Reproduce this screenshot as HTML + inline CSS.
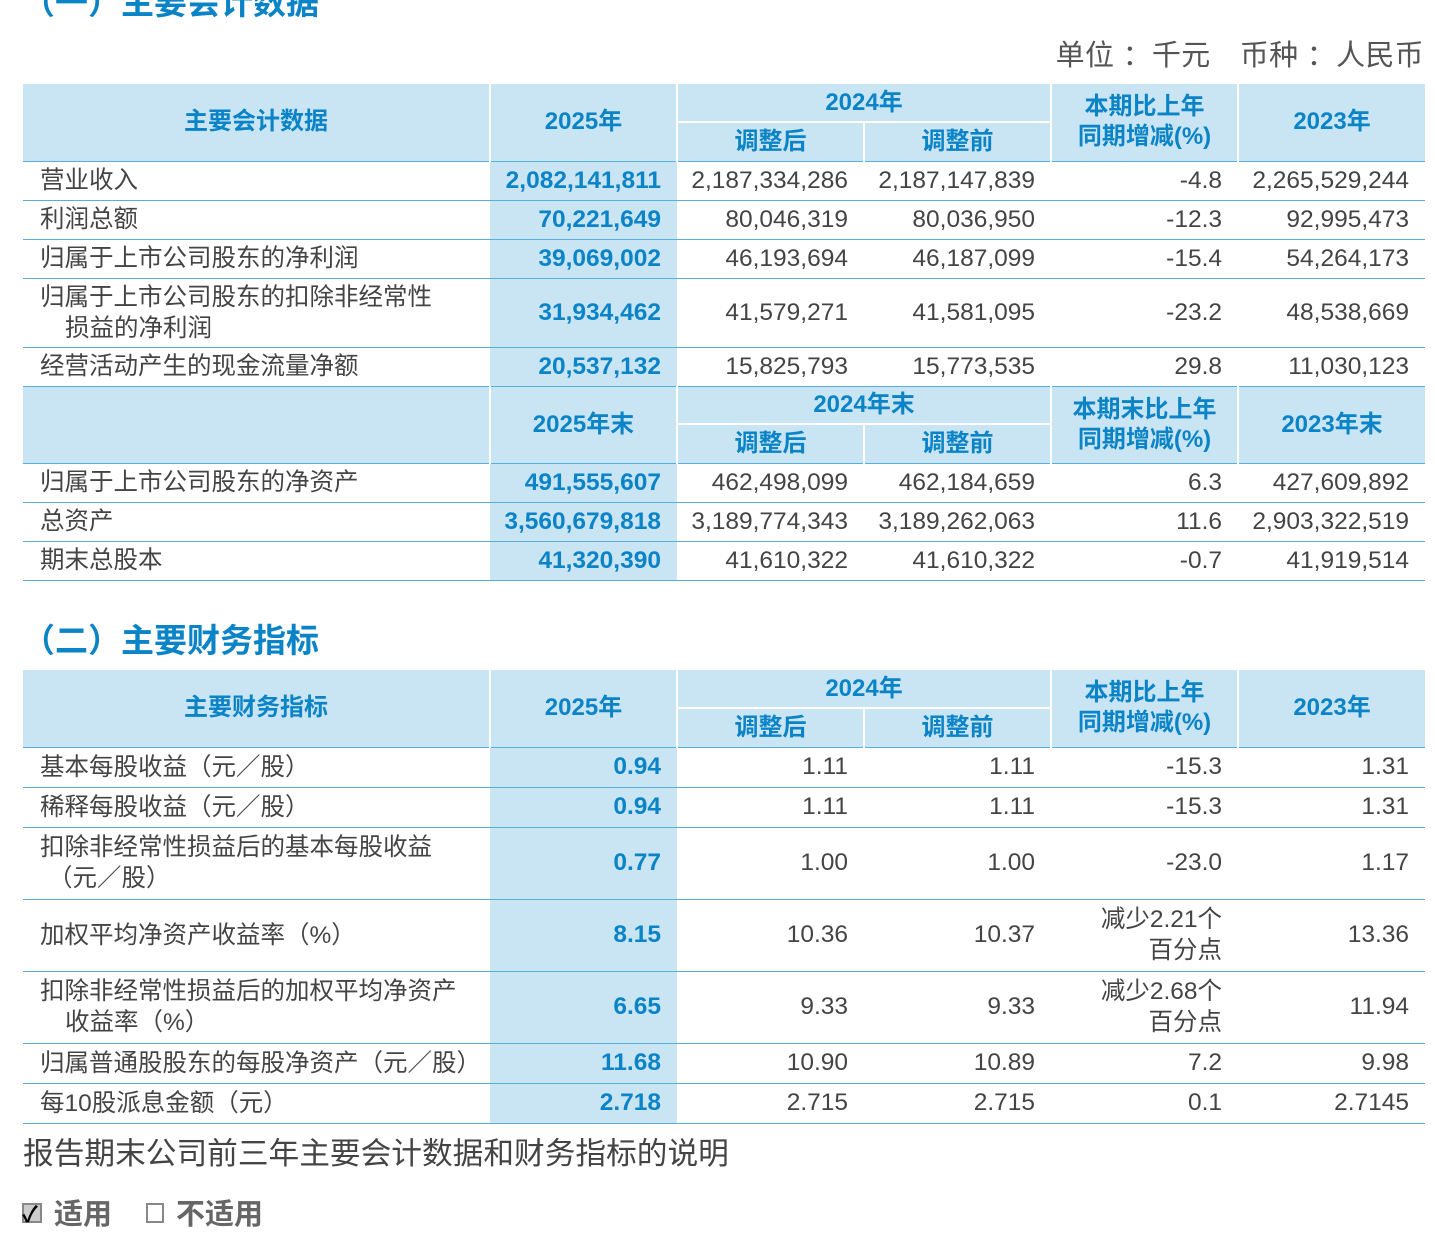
<!DOCTYPE html>
<html><head><meta charset="utf-8"><style>
body{margin:0;width:1435px;height:1231px;background:#fff;position:relative;overflow:hidden;font-family:"Liberation Sans","Noto Sans CJK SC",sans-serif;color:#444}
.t{position:absolute;white-space:nowrap}
table{position:absolute;left:23px;border-collapse:collapse;table-layout:fixed;font-size:24.5px}
td{padding:0;overflow:hidden;white-space:nowrap}
td.l{padding-left:17px;text-align:left;line-height:31px}
td.n{text-align:right;padding-right:16px}
td.b{background:#c9e4f3;color:#0a84c6;font-weight:bold}
tr.r td{border-bottom:1.5px solid #5aaede}
tr.h td{background:#c9e4f3;color:#0a84c6;font-weight:bold;text-align:center;border-left:2px solid #fff;border-right:2px solid #fff;line-height:30px;font-size:24px;border-bottom:1.5px solid #5aaede}
tr.h td.s{border-top:2px solid #fff}
tr.h1 td.s0{border-bottom:none}
.i{padding-left:25px}
</style></head><body>
<div class="t" style="left:22px;top:-24px;font-size:33px;font-weight:bold;color:#0a84c6">（一）主要会计数据</div>
<div class="t" style="right:11px;top:32px;font-size:29px;color:#555;letter-spacing:0.3px">单位 ：千元　币种 ：人民币</div>

<table style="top:84px;width:1402px">
<colgroup><col style="width:467px"><col style="width:187px"><col style="width:187px"><col style="width:187px"><col style="width:187px"><col style="width:187px"></colgroup>
<tr class="h h1" style="height:38px"><td rowspan="2" style="border-left:0">主要会计数据</td><td rowspan="2">2025年</td><td colspan="2" class="s0">2024年</td><td rowspan="2">本期比上年<br>同期增减(%)</td><td rowspan="2" style="border-right:0">2023年</td></tr>
<tr class="h" style="height:39px"><td class="s">调整后</td><td class="s">调整前</td></tr>
<tr class="r" style="height:39px"><td class="l">营业收入</td><td class="n b">2,082,141,811</td><td class="n">2,187,334,286</td><td class="n">2,187,147,839</td><td class="n">-4.8</td><td class="n">2,265,529,244</td></tr>
<tr class="r" style="height:39px"><td class="l">利润总额</td><td class="n b">70,221,649</td><td class="n">80,046,319</td><td class="n">80,036,950</td><td class="n">-12.3</td><td class="n">92,995,473</td></tr>
<tr class="r" style="height:39px"><td class="l">归属于上市公司股东的净利润</td><td class="n b">39,069,002</td><td class="n">46,193,694</td><td class="n">46,187,099</td><td class="n">-15.4</td><td class="n">54,264,173</td></tr>
<tr class="r" style="height:69px"><td class="l">归属于上市公司股东的扣除非经常性<br><span class="i">损益的净利润</span></td><td class="n b">31,934,462</td><td class="n">41,579,271</td><td class="n">41,581,095</td><td class="n">-23.2</td><td class="n">48,538,669</td></tr>
<tr class="r" style="height:39px"><td class="l">经营活动产生的现金流量净额</td><td class="n b">20,537,132</td><td class="n">15,825,793</td><td class="n">15,773,535</td><td class="n">29.8</td><td class="n">11,030,123</td></tr>
<tr class="h h1" style="height:38px"><td rowspan="2" style="border-left:0"></td><td rowspan="2">2025年末</td><td colspan="2" class="s0">2024年末</td><td rowspan="2">本期末比上年<br>同期增减(%)</td><td rowspan="2" style="border-right:0">2023年末</td></tr>
<tr class="h" style="height:39px"><td class="s">调整后</td><td class="s">调整前</td></tr>
<tr class="r" style="height:39px"><td class="l">归属于上市公司股东的净资产</td><td class="n b">491,555,607</td><td class="n">462,498,099</td><td class="n">462,184,659</td><td class="n">6.3</td><td class="n">427,609,892</td></tr>
<tr class="r" style="height:39px"><td class="l">总资产</td><td class="n b">3,560,679,818</td><td class="n">3,189,774,343</td><td class="n">3,189,262,063</td><td class="n">11.6</td><td class="n">2,903,322,519</td></tr>
<tr class="r" style="height:39px"><td class="l">期末总股本</td><td class="n b">41,320,390</td><td class="n">41,610,322</td><td class="n">41,610,322</td><td class="n">-0.7</td><td class="n">41,919,514</td></tr>
</table>

<div class="t" style="left:22px;top:614px;font-size:33px;font-weight:bold;color:#0a84c6">（二）主要财务指标</div>

<table style="top:670px;width:1402px">
<colgroup><col style="width:467px"><col style="width:187px"><col style="width:187px"><col style="width:187px"><col style="width:187px"><col style="width:187px"></colgroup>
<tr class="h h1" style="height:38px"><td rowspan="2" style="border-left:0">主要财务指标</td><td rowspan="2">2025年</td><td colspan="2" class="s0">2024年</td><td rowspan="2">本期比上年<br>同期增减(%)</td><td rowspan="2" style="border-right:0">2023年</td></tr>
<tr class="h" style="height:39px"><td class="s">调整后</td><td class="s">调整前</td></tr>
<tr class="r" style="height:40px"><td class="l">基本每股收益（元／股）</td><td class="n b">0.94</td><td class="n">1.11</td><td class="n">1.11</td><td class="n">-15.3</td><td class="n">1.31</td></tr>
<tr class="r" style="height:40px"><td class="l">稀释每股收益（元／股）</td><td class="n b">0.94</td><td class="n">1.11</td><td class="n">1.11</td><td class="n">-15.3</td><td class="n">1.31</td></tr>
<tr class="r" style="height:72px"><td class="l">扣除非经常性损益后的基本每股收益<br><span style="padding-left:8px">（元／股）</span></td><td class="n b">0.77</td><td class="n">1.00</td><td class="n">1.00</td><td class="n">-23.0</td><td class="n">1.17</td></tr>
<tr class="r" style="height:72px"><td class="l">加权平均净资产收益率（%）</td><td class="n b">8.15</td><td class="n">10.36</td><td class="n">10.37</td><td class="n" style="line-height:31px">减少2.21个<br>百分点</td><td class="n">13.36</td></tr>
<tr class="r" style="height:72px"><td class="l">扣除非经常性损益后的加权平均净资产<br><span class="i">收益率（%）</span></td><td class="n b">6.65</td><td class="n">9.33</td><td class="n">9.33</td><td class="n" style="line-height:31px">减少2.68个<br>百分点</td><td class="n">11.94</td></tr>
<tr class="r" style="height:40px"><td class="l">归属普通股股东的每股净资产（元／股）</td><td class="n b">11.68</td><td class="n">10.90</td><td class="n">10.89</td><td class="n">7.2</td><td class="n">9.98</td></tr>
<tr class="r" style="height:40px"><td class="l">每10股派息金额（元）</td><td class="n b">2.718</td><td class="n">2.715</td><td class="n">2.715</td><td class="n">0.1</td><td class="n">2.7145</td></tr>
</table>

<div class="t" style="left:23px;top:1128px;font-size:30.7px;color:#444">报告期末公司前三年主要会计数据和财务指标的说明</div>
<div class="t" style="left:22px;top:1191px;font-size:29px;font-weight:bold;color:#666"><span style="display:inline-block;width:16px;height:16px;border:2px solid #888;background:#ccc;position:relative;top:-1px;margin-right:12px"><span style="position:absolute;left:-2px;top:-8px;font-size:22px;color:#000;font-weight:bold">✓</span></span>适用<span style="display:inline-block;width:14px;height:16px;border:2px solid #888;margin:0 12px 0 34px;position:relative;top:-1px"></span>不适用</div>
</body></html>
